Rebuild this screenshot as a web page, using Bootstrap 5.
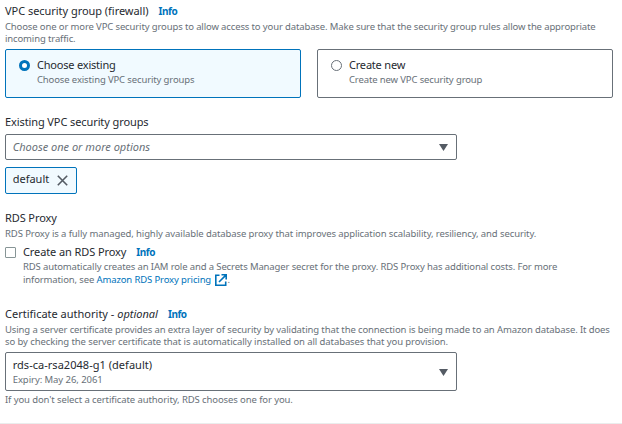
<!DOCTYPE html>
<html lang="en">
<head>
<meta charset="utf-8">
<meta name="viewport" content="width=device-width, initial-scale=1">
<title>Connectivity</title>
<link rel="stylesheet" href="https://cdn.jsdelivr.net/npm/bootstrap@5.3.0/dist/css/bootstrap.min.css">
<script src="https://cdn.jsdelivr.net/npm/bootstrap@5.3.0/dist/js/bootstrap.bundle.min.js"></script>
<style>
body{font-family:"Noto Sans","Open Sans",sans-serif;color:#16191f;background:#fff;overflow:hidden}
.page{height:424px;padding:4px 9px 0 5px;border-bottom:1px solid #eaeded}
.ttl{font-size:11px;line-height:14px;height:14px;white-space:nowrap;letter-spacing:-.1px;color:#262a30}
.desc{font-size:9.5px;line-height:12px;color:#687078;white-space:nowrap;letter-spacing:-.13px}
.info{font-size:10px;font-weight:700;color:#0073bb;text-decoration:none;letter-spacing:-.45px;margin-left:10px}
.lnk{color:#0073bb;text-decoration:none}
.tiles{gap:16px;margin-top:4px}
.tile{height:49px;border:1px solid #687078;border-radius:2px;padding:8px 0 0 13px;gap:7px}
.tile.active{border-color:#0073bb;background:#f1faff}
.tile .desc{margin-top:2px}
.form-check-input.pick{width:11px;height:11px;min-height:0;margin:2px 0 0;border:1px solid #687078;flex:none}
.form-check-input.pick:checked{border:3.5px solid #0073bb;background:#fff}
.form-check-input.box{border-radius:1px;border-color:#879596}
.picker{width:452px;border:1px solid #687078;border-radius:2px;padding:0 8.5px 0 6.7px}
.picker.short{height:26px;margin-top:5px}
.picker.tall{height:39px;margin-top:4px;padding-top:1px}
.picker .desc{margin-top:2px}
.chip{width:72px;height:27px;border:1px solid #0073bb;border-radius:2px;background:#f1faff;padding:0 8px 0 6.7px;margin-top:7px}
.chip .ttl{margin-bottom:3px}
.sec-a{margin-top:17px}
.sec-b{margin-top:21px}
.gap-top{margin-top:3px}
.proxy{margin-top:5px;gap:7px}
.proxy .desc{line-height:13px}
.proxy .first{padding-top:1px}
.ext{margin:1px .5px 0 4px}
svg{display:block;flex:none}
.ph{color:#687078;font-style:italic;letter-spacing:0}
.t0{letter-spacing:0}.t1{letter-spacing:-.04px}.t2{letter-spacing:-.2px}.t3{letter-spacing:.03px}
.d1{letter-spacing:-.1px}.d2{letter-spacing:-.112px}.d3{letter-spacing:-.09px}.d4{letter-spacing:-.065px}
</style>
</head>
<body>
<main class="page">
  <section>
    <div class="ttl t1">VPC security group (firewall)<a class="info" href="#">Info</a></div>
    <div class="desc gap-top">Choose one or more VPC security groups to allow access to your database. Make sure that the security group rules allow the appropriate<br>incoming traffic.</div>
    <div class="d-flex tiles">
      <label class="tile active d-flex align-items-start flex-fill w-50">
        <input class="form-check-input pick rounded-circle" type="radio" name="sg" checked>
        <span><span class="ttl t2 d-block">Choose existing</span><span class="desc d-block">Choose existing VPC security groups</span></span>
      </label>
      <label class="tile d-flex align-items-start flex-fill w-50">
        <input class="form-check-input pick rounded-circle" type="radio" name="sg">
        <span><span class="ttl t2 d-block">Create new</span><span class="desc d-block">Create new VPC security group</span></span>
      </label>
    </div>
  </section>
  <section class="sec-a">
    <div class="ttl">Existing VPC security groups</div>
    <div class="picker short d-flex align-items-center justify-content-between">
      <span class="ttl ph">Choose one or more options</span>
      <svg width="9" height="7" viewBox="0 0 9 7"><path d="M0 0h9L4.5 7z" fill="#545b64"/></svg>
    </div>
    <div class="chip d-flex align-items-center justify-content-between">
      <span class="ttl t0">default</span>
      <svg width="11" height="11" viewBox="0 0 11 11"><path d="M.8.8l9.4 9.4M10.2.8L.8 10.2" stroke="#545b64" stroke-width="1.6" fill="none"/></svg>
    </div>
  </section>
  <section class="sec-a">
    <div class="ttl">RDS Proxy</div>
    <div class="desc d1 gap-top">RDS Proxy is a fully managed, highly available database proxy that improves application scalability, resiliency, and security.</div>
    <div class="proxy d-flex align-items-start">
      <input class="form-check-input pick box" type="checkbox" id="proxy">
      <div>
        <label class="ttl d-block" for="proxy">Create an RDS Proxy<a class="info" href="#">Info</a></label>
        <div class="desc first">RDS automatically creates an IAM role and a Secrets Manager secret for the proxy. RDS Proxy has additional costs. For more</div>
        <div class="desc d-flex"><span>information, see <a class="lnk" href="#">Amazon RDS Proxy pricing</a></span>
          <svg class="ext" width="12" height="12" viewBox="0 0 12 12"><path d="M4.5 1.3H.8v9.9h9.9V7.5M6.5.8h4.7v4.7M10.9 1.1L4 8" stroke="#0073bb" stroke-width="1.6" fill="none"/></svg><span>.</span></div>
      </div>
    </div>
  </section>
  <section class="sec-b">
    <div class="ttl t0">Certificate authority - <em>optional</em><a class="info" href="#">Info</a></div>
    <div class="desc d2 gap-top">Using a server certificate provides an extra layer of security by validating that the connection is being made to an Amazon database. It does</div>
    <div class="desc d3">so by checking the server certificate that is automatically installed on all databases that you provision.</div>
    <div class="picker tall d-flex align-items-center justify-content-between">
      <span><span class="ttl t3 d-block">rds-ca-rsa2048-g1 (default)</span><span class="desc d4 d-block">Expiry: May 26, 2061</span></span>
      <svg width="9" height="7" viewBox="0 0 9 7"><path d="M0 0h9L4.5 7z" fill="#545b64"/></svg>
    </div>
    <div class="desc d1 gap-top">If you don't select a certificate authority, RDS chooses one for you.</div>
  </section>
</main>
</body>
</html>
